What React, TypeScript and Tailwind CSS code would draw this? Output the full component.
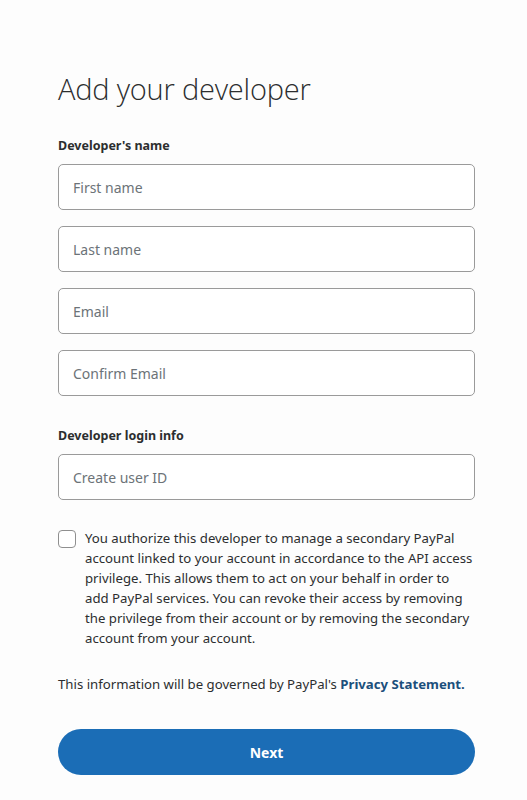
import React from 'react';

const fields = ['First name', 'Last name', 'Email', 'Confirm Email'];

const Field = ({ placeholder }: { placeholder: string }) => (
  <input
    type="text"
    placeholder={placeholder}
    className="w-full h-[46px] rounded-[5px] border border-[#9a9a9a] bg-white px-[14px] text-[14px] text-[#2c2e2f] placeholder:text-[#6c7378] outline-none"
  />
);

export default function App() {
  return (
    <div className="min-h-[800px] w-full bg-[#fdfdfd] font-['Noto_Sans',sans-serif] text-[#2c2e2f]">
      <div className="ml-[58px] pt-[70px] w-[417px]">
        <h1 className="font-['Open_Sans',sans-serif] font-light text-[29px] leading-[38px] text-[#2c2e2f] tracking-[-0.2px]">
          Add your developer
        </h1>

        <div className="mt-[29px] text-[12.5px] font-bold leading-[18px]">Developer's name</div>
        <div className="mt-[9px] flex flex-col gap-[16px]">
          {fields.map(f => (
            <Field key={f} placeholder={f} />
          ))}
        </div>

        <div className="mt-[31px] text-[12.5px] font-bold leading-[18px]">Developer login info</div>
        <div className="mt-[9px]">
          <Field placeholder="Create user ID" />
        </div>

        <div className="mt-[28px] flex items-start gap-[9px]">
          <span className="mt-[2px] w-[18px] h-[18px] shrink-0 rounded-[4px] border border-[#8f8f8f] bg-white" />
          <p className="text-[13.2px] leading-[20px] text-[#2c2e2f]">
            You authorize this developer to manage a secondary PayPal account linked to your account in accordance to the API access privilege. This allows them to act on your behalf in order to add PayPal services. You can revoke their access by removing the privilege from their account or by removing the secondary account from your account.
          </p>
        </div>

        <p className="mt-[26px] text-[13.2px] leading-[20px]">
          This information will be governed by PayPal's{' '}
          <span className="font-bold text-[#1b4f7c]">Privacy Statement.</span>
        </p>

        <button className="mt-[35px] w-full h-[46px] rounded-full bg-[#1b6db6] text-white text-[14px] font-bold">
          Next
        </button>
      </div>
    </div>
  );
}
